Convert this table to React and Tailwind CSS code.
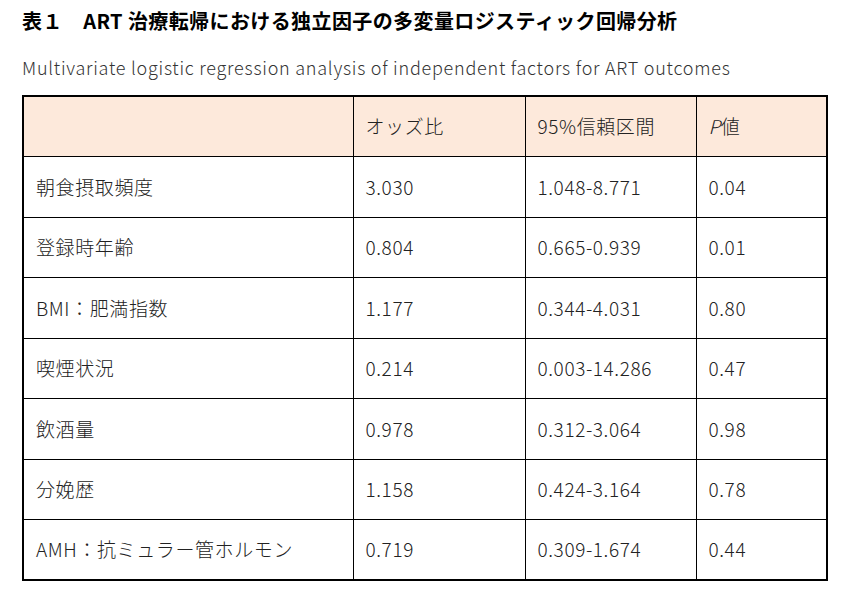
import React from 'react'

const rows = [
  ['朝食摂取頻度', '3.030', '1.048-8.771', '0.04'],
  ['登録時年齢', '0.804', '0.665-0.939', '0.01'],
  ['BMI：肥満指数', '1.177', '0.344-4.031', '0.80'],
  ['喫煙状況', '0.214', '0.003-14.286', '0.47'],
  ['飲酒量', '0.978', '0.312-3.064', '0.98'],
  ['分娩歴', '1.158', '0.424-3.164', '0.78'],
  ['AMH：抗ミュラー管ホルモン', '0.719', '0.309-1.674', '0.44'],
]

const cell = 'border border-black px-3 h-[60.5px] align-middle'

const App = () => {
  return (
    <div className="w-[848px] h-[599px] bg-white px-[22px] pt-[7px] font-['Noto_Sans_CJK_JP',sans-serif] text-[#222]">
      <div className="text-[20px] font-bold text-black leading-[28px] tracking-[0.4px]">表１　ART 治療転帰における独立因子の多変量ロジスティック回帰分析</div>
      <div className="mt-[19px] text-[18px] leading-[26px] text-[#333] font-light tracking-[0.75px]">
        Multivariate logistic regression analysis of independent factors for ART outcomes
      </div>
      <table className="mt-[15px] w-[806px] border-collapse border-2 border-black text-[19px] font-light tracking-[0.6px]">
        <thead>
          <tr className="bg-[#fde9db]">
            <th className={cell + ' w-[330px] font-light text-left'}></th>
            <th className={cell + ' w-[172px] font-light text-left'}>オッズ比</th>
            <th className={cell + ' w-[171px] font-light text-left'}>95%信頼区間</th>
            <th className={cell + ' font-light text-left'}><i>P</i>値</th>
          </tr>
        </thead>
        <tbody>
          {rows.map((r) => (
            <tr key={r[0]}>
              {r.map((c, i) => (
                <td key={i} className={cell}>{c}</td>
              ))}
            </tr>
          ))}
        </tbody>
      </table>
    </div>
  )
}

export default App
